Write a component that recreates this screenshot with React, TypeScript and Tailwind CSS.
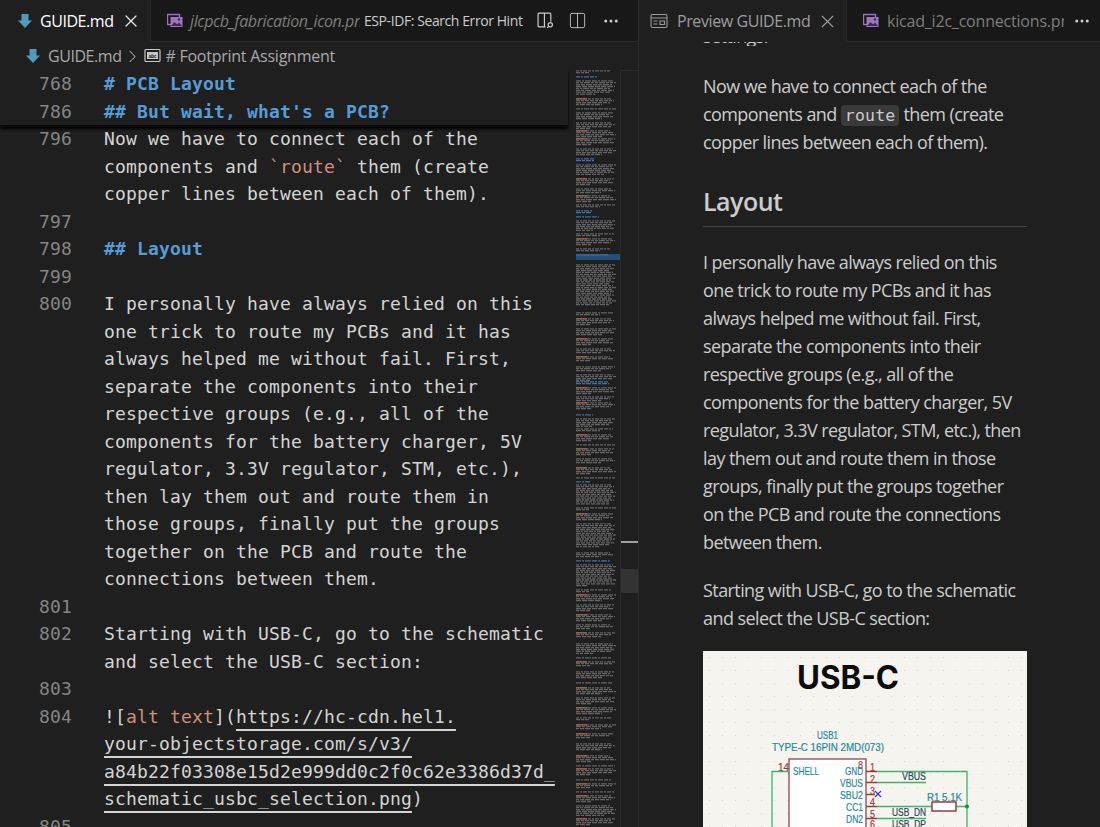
import React from 'react';
import { ChevronRight, Ellipsis, X, Columns2 } from 'lucide-react';

const mono = "font-['DejaVu_Sans_Mono',monospace] tracking-[0.16px]";
const ui = "font-['Open_Sans','Noto_Sans',sans-serif]";

type Seg = { t: string; c?: string };
type Row = { n?: string; segs?: Seg[]; text?: string };

const url = 'text-[#d4d4d4] underline underline-offset-[6px] decoration-2';

const rows: Row[] = [
  { n: '796', text: 'Now we have to connect each of the' },
  { segs: [{ t: 'components and ' }, { t: '`route`', c: 'text-[#ce9178]' }, { t: ' them (create' }] },
  { text: 'copper lines between each of them).' },
  { n: '797' },
  { n: '798', segs: [{ t: '## Layout', c: 'text-[#569cd6] font-bold' }] },
  { n: '799' },
  { n: '800', text: 'I personally have always relied on this' },
  { text: 'one trick to route my PCBs and it has' },
  { text: 'always helped me without fail. First,' },
  { text: 'separate the components into their' },
  { text: 'respective groups (e.g., all of the' },
  { text: 'components for the battery charger, 5V' },
  { text: 'regulator, 3.3V regulator, STM, etc.),' },
  { text: 'then lay them out and route them in' },
  { text: 'those groups, finally put the groups' },
  { text: 'together on the PCB and route the' },
  { text: 'connections between them.' },
  { n: '801' },
  { n: '802', text: 'Starting with USB-C, go to the schematic' },
  { text: 'and select the USB-C section:' },
  { n: '803' },
  { n: '804', segs: [{ t: '![' }, { t: 'alt text', c: 'text-[#ce9178]' }, { t: '](' }, { t: 'https://hc-cdn.hel1.', c: url }] },
  { segs: [{ t: 'your-objectstorage.com/s/v3/', c: url }] },
  { segs: [{ t: 'a84b22f03308e15d2e999dd0c2f0c62e3386d37d_', c: url }] },
  { segs: [{ t: 'schematic_usbc_selection.png', c: url }, { t: ')' }] },
  { n: '805' },
];

const MdIcon = ({ className }: { className: string }) => (
  <svg width="16" height="16" viewBox="0 0 16 16" className={className}>
    <path d="M4.500 1h7v6.500h3.500L8 15 1 7.500h3.500z" fill="currentColor" />
  </svg>
);

const ImageIcon = () => (
  <svg width="16" height="16" viewBox="0 0 16 16" className="shrink-0">
    <rect x="0.5" y="1.500" width="12" height="10" fill="none" stroke="#a074c4" strokeWidth="1.4" />
    <rect x="3.500" y="4" width="12" height="10" fill="#a074c4" />
    <path d="M4 13l3.500-4 2.500 2.500 2-2 3 3.500z" fill="#3b2a4c" />
    <circle cx="12" cy="6.500" r="1.200" fill="#3b2a4c" />
  </svg>
);

// y, number of 2px lines, colour kind: g text, b heading, o starts with link text
const blocks: [number, number, string][] = [
  [70, 2, 'g'], [76, 1, 'b'], [80, 8, 'g'], [98, 4, 'o'], [108, 1, 'g'], [112, 4, 'g'], [122, 4, 'g'], [130, 4, 'o'], [138, 4, 'o'],
  [148, 4, 'g'], [158, 2, 'b'], [164, 6, 'g'], [178, 4, 'o'], [188, 3, 'g'], [195, 4, 'o'], [204, 2, 'g'], [210, 2, 'b'], [216, 1, 'b'],
  [220, 6, 'g'], [233, 2, 'g'], [238, 4, 'o'], [248, 2, 'g'], [264, 22, 'g'], [312, 2, 'g'], [318, 4, 'o'], [328, 4, 'g'], [338, 4, 'o'],
  [348, 3, 'g'], [356, 3, 'o'], [366, 3, 'g'], [374, 4, 'g'], [381, 2, 'b'], [387, 4, 'o'], [396, 3, 'g'], [402, 4, 'o'], [414, 1, 'b'],
  [418, 5, 'g'], [428, 2, 'g'], [434, 4, 'o'], [444, 1, 'g'], [448, 4, 'o'], [458, 3, 'g'], [467, 4, 'o'], [477, 1, 'g'], [481, 1, 'b'],
  [484, 11, 'g'], [507, 2, 'g'], [513, 4, 'o'],
  [523, 13, 'g'], [552, 3, 'g'], [560, 1, 'b'], [564, 12, 'g'], [589, 2, 'g'], [594, 4, 'o'], [604, 4, 'g'], [614, 4, 'o'], [624, 3, 'g'],
  [632, 3, 'o'], [643, 6, 'g'], [657, 1, 'g'], [661, 3, 'o'], [671, 4, 'g'], [682, 1, 'g'], [687, 4, 'o'], [697, 4, 'g'], [707, 4, 'o'],
  [717, 2, 'g'], [724, 3, 'o'], [733, 3, 'o'], [743, 4, 'g'], [755, 4, 'o'], [765, 1, 'g'], [768, 4, 'o'], [779, 1, 'g'], [783, 3, 'o'],
  [791, 1, 'g'], [795, 4, 'o'], [805, 6, 'g'], [818, 4, 'o'],
];

const MinimapLines = () => {
  const bars: React.ReactNode[] = [];
  blocks.forEach(([y, count, kind], bi) => {
    for (let i = 0; i < count; i++) {
      const last = i === count - 1 && count > 1;
      const w = kind === 'b' ? 14 + ((bi * 7) % 22) : last ? 12 + ((bi * 11 + i) % 22) : 34 + ((bi * 5 + i * 3) % 7);
      const ly = y + i * 1.9 + 0.8;
      const color = kind === 'b' ? '#3f82c0' : '#a8a8a8';
      const dash = `${3 + ((bi + i) % 3)} 1 ${2 + (i % 4)} 1 ${4 + (bi % 3)} 1`;
      bars.push(
        <line key={`${bi}-${i}`} x1={0} x2={w} y1={ly} y2={ly} stroke={color} strokeWidth={1.300} strokeDasharray={dash} opacity={kind === 'b' ? 0.85 : 0.5} />,
      );
      if (kind === 'o' && i === 0) bars.push(<line key={`o${bi}`} x1={0} x2={11} y1={ly} y2={ly} stroke="#a8644a" strokeWidth={1.300} />);
    }
  });
  return (
    <svg width="44" height="757" viewBox="0 70 44 757" className="block">
      <rect x="0" y="254" width="44" height="6" fill="#264f78" />
      <rect x="0" y="254" width="32" height="2" fill="#2f6196" />
      {bars}
    </svg>
  );
};

// schematic label squeezed to the width the KiCad stroke font takes
const Label = ({ x, y, w, fill, children }: { x: number; y: number; w: number; fill: string; children: string }) => (
  <text x={x} y={y} textLength={w} lengthAdjust="spacingAndGlyphs" fontFamily="'Liberation Sans', sans-serif" fontSize="11" fill={fill} stroke={fill} strokeWidth="0.2">
    {children}
  </text>
);

const Schematic = () => {
  const teal = '#1f8a9c';
  const red = '#a13b3b';
  const dark = '#27474f';
  return (
    <svg viewBox="0 0 324 176" width="324" height="176" className="block">
      <defs>
        <pattern id="dots" width="13" height="13" patternUnits="userSpaceOnUse">
          <rect x="6" y="6" width="1" height="1" fill="#d9d7d0" />
        </pattern>
      </defs>
      <rect width="324" height="176" fill="#f5f4ef" />
      <rect width="324" height="176" fill="url(#dots)" />
      <text x="94" y="38" textLength="102" lengthAdjust="spacingAndGlyphs" fontFamily="Inter, sans-serif" fontWeight="700" fontSize="32" fill="#0c0c0c">USB-C</text>
      <Label x={114} y={88} w={21} fill={teal}>USB1</Label>
      <Label x={69} y={100} w={112} fill={teal}>TYPE-C 16PIN 2MD(073)</Label>
      <rect x="86" y="108" width="77" height="72" fill="#fff" stroke="#94525f" strokeWidth="1.400" />
      <Label x={90} y={124} w={26} fill={teal}>SHELL</Label>
      <Label x={142} y={124} w={18} fill={teal}>GND</Label>
      <Label x={137} y={136} w={23} fill={teal}>VBUS</Label>
      <Label x={137} y={148} w={23} fill={teal}>SBU2</Label>
      <Label x={143} y={160} w={17} fill={teal}>CC1</Label>
      <Label x={143} y={172} w={17} fill={teal}>DN2</Label>
      <Label x={75} y={120} w={11} fill={red}>14</Label>
      <Label x={155} y={118} w={5} fill={red}>8</Label>
      <Label x={167} y={120} w={5} fill={red}>1</Label>
      <Label x={167} y={132} w={5} fill={red}>2</Label>
      <Label x={167} y={144} w={5} fill={red}>3</Label>
      <Label x={167} y={155} w={5} fill={red}>4</Label>
      <Label x={167} y={167} w={5} fill={red}>5</Label>
      <Label x={167} y={177} w={5} fill={red}>6</Label>
      <path d="M69 176V120.500H86M174 120.500H264V176M174 131.500H223M174 155.500H229M253 155.500H264M174 167.500H223" fill="none" stroke="#3cb371" strokeWidth="1.300" />
      <path d="M163 120.500H174M163 131.500H174M163 143.500H172M163 155.500H174M163 167.500H174" stroke={red} strokeWidth="1.300" />
      <path d="M172 140l6 6M178 140l-6 6" stroke="#2b3fc4" strokeWidth="1.200" />
      <rect x="229" y="151" width="24" height="9" fill="#fff" stroke="#8c2f3a" strokeWidth="1.400" />
      <circle cx="264" cy="155.500" r="2" fill="#0a9a2a" />
      <Label x={224} y={150} w={35} fill={teal}>R1 5.1K</Label>
      <Label x={199} y={129} w={24} fill={dark}>VBUS</Label>
      <Label x={189} y={165} w={34} fill={dark}>USB_DN</Label>
      <Label x={189} y={177} w={34} fill={dark}>USB_DP</Label>
    </svg>
  );
};

const Para = ({ children, className = '' }: { children: React.ReactNode; className?: string }) => (
  <p className={`text-[18px] leading-[28px] tracking-[-0.58px] text-[#cccccc] ${className}`}>{children}</p>
);

export default function App() {
  return (
    <div className={`w-[1100px] h-[827px] overflow-hidden flex bg-[#1f1f1f] ${ui}`}>
      {/* left editor group */}
      <div className="w-[638px] h-full flex flex-col shrink-0">
        <div className="h-[42px] flex bg-[#181818] shrink-0">
          <div className="w-[150px] flex items-center pl-[17px] bg-[#1f1f1f] shrink-0">
            <MdIcon className="text-[#519aba] mr-[7px]" />
            <span className="text-[16px] tracking-[-0.45px] text-white">GUIDE.md</span>
            <X size={20} strokeWidth={1.500} className="ml-[8px] text-[#e8e8e8]" />
          </div>
          <div className="w-[210px] flex items-center pl-[16px] border-b border-[#2b2b2b] border-l overflow-hidden shrink-0">
            <ImageIcon />
            <span className="ml-[7px] text-[16px] italic tracking-[-0.4px] text-[#7d7d7d] whitespace-nowrap">jlcpcb_fabrication_icon.png</span>
          </div>
          <div className="flex-1 flex items-center border-b border-[#2b2b2b] pl-[4px]">
            <span className="text-[14px] tracking-[-0.42px] text-[#cccccc] whitespace-nowrap w-[173px]">ESP-IDF: Search Error Hint</span>
            <svg width="17" height="17" viewBox="0 0 16 16" fill="none" stroke="#cccccc" strokeWidth="1.100">
              <path d="M8 14H2a1 1 0 0 1-1-1V2a1 1 0 0 1 1-1h10a1 1 0 0 1 1 1v7M7 1v13" />
              <circle cx="12.500" cy="12" r="2" />
              <path d="M11 13.600L9.500 15" />
            </svg>
            <Columns2 size={19} strokeWidth={1.100} className="ml-[14px] text-[#cccccc]" />
            <Ellipsis size={18} className="ml-[15px] text-[#cccccc]" />
          </div>
        </div>
        <div className="h-[28px] flex items-center pl-[25px] shrink-0 text-[16px] tracking-[-0.45px] text-[#a9a9a9]">
          <MdIcon className="text-[#519aba] mr-[7px]" />
          <span>GUIDE.md</span>
          <ChevronRight size={21} strokeWidth={1.200} className="mx-[1px] text-[#a9a9a9]" />
          <svg width="17" height="16" viewBox="0 0 17 16" className="mr-[4px]">
            <rect x="1" y="1.500" width="15" height="12" rx="1" fill="none" stroke="#c8c8c8" strokeWidth="1.200" />
            <rect x="3" y="4" width="11" height="7" fill="#c8c8c8" />
            <text x="8.500" y="9.500" textAnchor="middle" fontFamily="'Liberation Sans', sans-serif" fontWeight="700" fontSize="5" fill="#1f1f1f">abc</text>
          </svg>
          <span className="tracking-[-0.25px]"># Footprint Assignment</span>
        </div>
        <div className="flex-1 flex min-h-0">
          <div className="w-[576px] relative overflow-hidden shrink-0">
            {/* sticky scroll */}
            <div className={`absolute top-0 left-0 w-[568px] bg-[#1f1f1f] border-b-2 border-[#0a0a0a] shadow-[0_2px_3px_#000] z-10 text-[18px] ${mono}`}>
              <div className="flex h-[28px] leading-[28px]">
                <span className="w-[104px] pl-[39px] text-[#858585]">768</span>
                <span className="text-[#569cd6] font-bold"># PCB Layout</span>
              </div>
              <div className="flex h-[27px] leading-[28px]">
                <span className="w-[104px] pl-[39px] text-[#858585]">786</span>
                <span className="text-[#569cd6] font-bold">## But wait, what's a PCB?</span>
              </div>
            </div>
            <div className={`pt-[55px] text-[18px] ${mono}`}>
              {rows.map((r, i) => (
                <div key={i} className="flex h-[27.5px] leading-[27.5px] whitespace-pre">
                  <span className="w-[104px] pl-[39px] text-[#858585] shrink-0">{r.n}</span>
                  <span className="text-[#d4d4d4]">
                    {r.text}
                    {r.segs?.map((s, j) => (
                      <span key={j} className={s.c}>{s.t}</span>
                    ))}
                  </span>
                </div>
              ))}
            </div>
          </div>
          <div className="w-[44px] shrink-0 overflow-hidden">
            <MinimapLines />
          </div>
          <div className="flex-1 border-l border-[#2b2b2b] border-t relative">
            <div className="absolute left-0 right-0 top-[470px] h-[2px] bg-[#a0a0a0]" />
            <div className="absolute left-0 right-0 top-[498px] h-[24px] bg-[#333333]" />
          </div>
        </div>
      </div>

      {/* right preview group */}
      <div className="flex-1 h-full flex flex-col border-l border-[#2b2b2b] min-w-0">
        <div className="h-[42px] flex bg-[#181818] shrink-0">
          <div className="w-[207px] flex items-center pl-[11px] bg-[#1f1f1f] shrink-0">
            <svg width="18" height="16" viewBox="0 0 18 16" fill="none" stroke="#9a9a9a" strokeWidth="1.100">
              <rect x="1" y="1.500" width="16" height="13" rx="1.500" />
              <path d="M1 5h16M3.500 8h4M3.500 11h4M10 8h4.500v3.500H10z" />
            </svg>
            <span className="ml-[9px] text-[16px] tracking-[-0.4px] text-[#9d9d9d] whitespace-nowrap">Preview GUIDE.md</span>
            <X size={21} strokeWidth={1.300} className="ml-[7px] text-[#9d9d9d]" />
          </div>
          <div className="flex-1 flex items-center pl-[16px] border-l border-b border-[#2b2b2b] min-w-0">
            <ImageIcon />
            <span className="ml-[8px] w-[177px] overflow-hidden text-[16px] tracking-[-0.2px] text-[#7d7d7d] whitespace-nowrap shrink-0">kicad_i2c_connections.png</span>
            <Ellipsis size={18} className="ml-[9px] text-[#cccccc] shrink-0" />
          </div>
        </div>
        <div className="flex-1 min-h-0 overflow-hidden pl-[64px] w-[388px] relative">
          <Para className="h-[4px] overflow-hidden">
            <span className="block -mt-[20px]">settings.</span>
          </Para>
          <Para className="mt-[26px]">
            Now we have to connect each of the components and{' '}
            <code className={`bg-[#3a3a3a] rounded-[4px] px-[4px] py-[1px] text-[16.5px] leading-none ${mono}`}>route</code>{' '}
            them (create copper lines between each of them).
          </Para>
          <h2 className="mt-[29px] pb-[9px] border-b border-[#454545] text-[25px] font-semibold leading-[32px] tracking-[-0.5px] text-[#cccccc]">Layout</h2>
          <Para className="mt-[21px]">
            I personally have always relied on this one trick to route my PCBs and it has always helped me without fail. First, separate the components into their respective groups (e.g., all of the components for the battery charger, 5V regulator, 3.3V regulator, STM, etc.), then lay them out and route them in those groups, finally put the groups together on the PCB and route the connections between them.
          </Para>
          <Para className="mt-[20px]">Starting with USB-C, go to the schematic and select the USB-C section:</Para>
          <div className="mt-[19px]">
            <Schematic />
          </div>
        </div>
      </div>
    </div>
  );
}
